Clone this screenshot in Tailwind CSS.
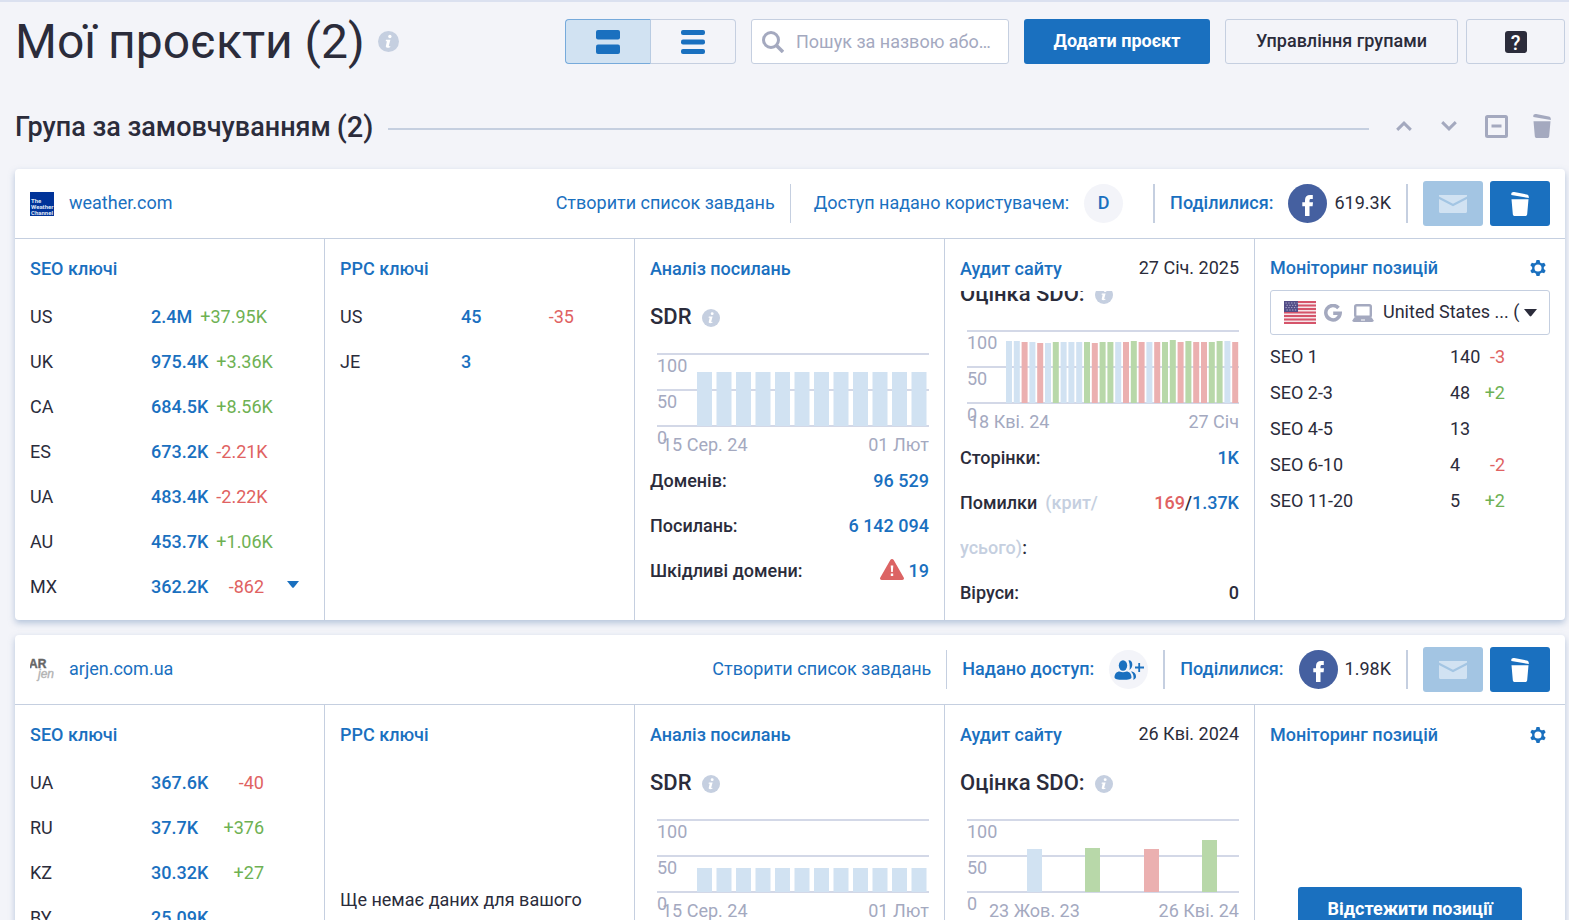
<!DOCTYPE html>
<html lang="uk">
<head>
<meta charset="utf-8">
<meta name="viewport" content="width=device-width, initial-scale=1">
<title>Мої проєкти</title>
<script src="https://cdn.jsdelivr.net/npm/@tailwindcss/browser@4"></script>
</head>
<body class="bg-[#f3f4f9] font-[Roboto,sans-serif] text-[18px] leading-[24px] text-[#2b2c3b]">
<svg class="hidden" aria-hidden="true">
  <symbol id="info" viewBox="0 0 20 20"><circle cx="10" cy="10" r="10" fill="#c5cfe0"/><circle cx="11.3" cy="5.2" r="1.6" fill="#fff"/><path d="M7.6 8.4h4.200l-1.500 5.600c-.1.500.3.600 1.500.2l-.3 1.200c-2.500.9-4.400.7-4-1.100l1-4.500H7.300z" fill="#fff"/></symbol>
  <symbol id="bin" viewBox="0 0 18 24"><path d="M.3 1.800C.4.600 1.500-.2 3.200.100l12.500 2.400c1.500.3 2.300 1.200 2.100 3.500L.3 2.900zM.5 7.200h17l-1.300 14.700c-.1 1.300-.9 2.100-2.100 2.100H3.900c-1.200 0-2-.8-2.100-2.100z" fill="currentColor"/></symbol>
  <symbol id="mail" viewBox="0 0 28 18"><path d="M0 0h28v1.500L14 8.800 0 1.500zM0 4l14 7.300L28 4v12.500c0 .9-.6 1.500-1.500 1.500h-25C.6 18 0 17.400 0 16.500z" fill="currentColor"/></symbol>
  <symbol id="fb" viewBox="0 0 39 39"><circle cx="19.500" cy="19.500" r="19.500" fill="#4560a0"/><path d="M17 32V22.200h-2.700v-3.900H17v-2.200c0-3.400 2-5.100 5-5.100h2.800v4h-1.700c-1.300 0-1.600.6-1.600 1.700v1.600H25l-.4 3.900h-3.100V32z" fill="#fff"/></symbol>
  <symbol id="gear" viewBox="-8 -8 16 16"><g fill="currentColor"><path d="M-1.500-8h3l1 3.800h-5z"/><path d="M-1.500-8h3l1 3.800h-5z" transform="rotate(60)"/><path d="M-1.500-8h3l1 3.800h-5z" transform="rotate(120)"/><path d="M-1.500-8h3l1 3.800h-5z" transform="rotate(180)"/><path d="M-1.500-8h3l1 3.800h-5z" transform="rotate(240)"/><path d="M-1.500-8h3l1 3.800h-5z" transform="rotate(300)"/></g><circle r="4.700" fill="none" stroke="currentColor" stroke-width="2.300"/></symbol>
</svg>

<div class="flex h-screen flex-col overflow-hidden border-t-2 border-[#dbe1f0] pr-1 pl-[15px]">
  <header class="flex shrink-0 items-start pt-[17px]">
    <h1 class="flex flex-1 items-center gap-[13px] text-[48px] leading-[45px] whitespace-nowrap">Мої проєкти (2)<svg class="size-[21px]"><use href="#info"/></svg></h1>
    <div class="flex h-[45px] w-[171px]">
      <button aria-label="Картки" class="grid flex-1 place-items-center rounded-l border border-[#76aadb] border-r-[#b8cbe2] bg-[#d1e2f2]"><svg width="24" height="24" fill="#1a70bf"><rect width="24" height="9.500" rx="2"/><rect y="14.500" width="24" height="9.500" rx="2"/></svg></button>
      <button aria-label="Список" class="grid flex-1 place-items-center rounded-r border border-l-0 border-[#c5cfe0]"><svg width="24" height="24" fill="#1a70bf"><rect width="24" height="5" rx="2"/><rect y="9.500" width="24" height="5" rx="2"/><rect y="19" width="24" height="5" rx="2"/></svg></button>
    </div>
    <label class="ml-[15px] flex h-[45px] w-[258px] items-center gap-3 rounded-[3px] border border-[#c5cfe0] bg-white pl-[10px]">
      <svg width="22" height="22" fill="none" stroke="#a4a9bf"><circle cx="9" cy="9" r="7.500" stroke-width="3"/><path d="M14 14l7 7" stroke-width="3.500"/></svg>
      <input type="text" aria-label="Пошук" placeholder="Пошук за назвою або…" class="w-full min-w-0 flex-1 bg-transparent outline-none placeholder:text-[#a4a9bf]">
    </label>
    <button class="ml-[15px] h-[45px] w-[186px] rounded-[3px] bg-[#1a70bf] pb-0.5 font-bold text-white">Додати проєкт</button>
    <button class="ml-[15px] h-[45px] w-[233px] rounded-[3px] border border-[#c5cfe0] pb-0.5 font-medium">Управління групами</button>
    <button aria-label="Довідка" class="ml-2 grid h-[45px] w-[99px] place-items-center rounded-[3px] border border-[#c5cfe0]"><span class="grid size-[22px] place-items-center rounded-[3px] bg-[#2b2c3b] text-[20px] font-medium text-white">?</span></button>
  </header>

  <section class="mt-11 flex h-[36px] shrink-0 items-center text-[#a4a9bf]">
    <h2 class="flex items-center gap-[6px] pt-0.5 text-[27px] font-medium whitespace-nowrap text-[#2b2c3b]">Група за замовчуванням<span class="text-[29px]">(2)</span></h2>
    <hr class="mt-[5px] ml-[15px] flex-1 border-t-2 border-[#c5cfe0]">
    <button aria-label="Вгору" class="ml-[27px]"><svg width="16" height="10" fill="none" stroke="currentColor" stroke-width="3"><path d="M1.200 8.800L8 2.200l6.800 6.600"/></svg></button>
    <button aria-label="Вниз" class="ml-[29px]"><svg width="16" height="10" fill="none" stroke="currentColor" stroke-width="3"><path d="M1.200 1.200L8 7.800l6.800-6.600"/></svg></button>
    <button aria-label="Згорнути" class="ml-[28px]"><svg width="23" height="23" fill="none" stroke="currentColor" stroke-width="3"><rect x="1.500" y="1.500" width="20" height="20" rx="1"/><path d="M6.500 11h10"/></svg></button>
    <button aria-label="Видалити групу" class="mr-[14px] ml-[25px]"><svg class="h-6 w-[18px]"><use href="#bin"/></svg></button>
  </section>

  <article class="mt-[25px] shrink-0 rounded bg-white shadow-[0_3px_6px_rgba(120,150,190,0.5)]">
    <header class="flex h-[70px] items-center border-b border-[#c5cfe0] px-[15px] whitespace-nowrap text-[#1a70bf] [&_a]:pb-0.5 [&_span]:pb-0.5">
      <svg width="24" height="24" class="mr-[15px]"><rect width="24" height="24" fill="#003399"/><g fill="#dfe6f5" font-family="Roboto" font-weight="700" font-size="6"><text x="1" y="11">The</text><text x="1" y="17">Weather</text><text x="1" y="22.500">Channel</text></g></svg>
      <a href="#">weather.com</a>
      <a href="#" class="ml-auto">Створити список завдань</a>
      <div class="ml-[15px] flex h-[39px] items-center border-l border-[#c5cfe0] pl-[23px]"><span>Доступ надано користувачем:</span><span class="ml-[15px] grid size-[39px] place-items-center rounded-full bg-[#f3f4f9] font-medium">D</span></div>
      <div class="ml-[30px] flex h-[39px] items-center border-l-2 border-[#c5cfe0] pl-[15px]"><span class="font-medium">Поділилися:</span><svg class="ml-[15px] size-[39px]"><use href="#fb"/></svg><span class="ml-[7px] text-[#2b2c3b]">619.3K</span></div>
      <div class="ml-[15px] flex h-[39px] items-center gap-[7px] border-l-2 border-[#c5cfe0] pl-[15px]">
        <button aria-label="Надіслати" class="grid h-[45px] w-[60px] place-items-center rounded-[3px] bg-[#a3c5e3] text-[#d1e2f2]"><svg class="h-[18px] w-7"><use href="#mail"/></svg></button>
        <button aria-label="Видалити" class="grid h-[45px] w-[60px] place-items-center rounded-[3px] bg-[#1a70bf] text-white"><svg class="h-6 w-[18px]"><use href="#bin"/></svg></button>
      </div>
    </header>
    <div class="grid h-[381px] grid-cols-5 divide-x divide-[#c5cfe0]">
      <section class="px-[15px]">
        <h3 class="flex h-[55px] items-center pt-1 font-medium"><a href="#" class="text-[#1a70bf]">SEO ключі</a></h3>
        <table class="block"><tbody class="block whitespace-nowrap">
          <tr class="flex h-[45px] items-center"><td class="w-[121px] shrink-0">US</td><td class="flex w-[113px] justify-between gap-2"><a href="#" class="font-medium text-[#1a70bf]">2.4M</a><span class="text-[#6eb153]">+37.95K</span></td></tr>
          <tr class="flex h-[45px] items-center"><td class="w-[121px] shrink-0">UK</td><td class="flex w-[113px] justify-between gap-2"><a href="#" class="font-medium text-[#1a70bf]">975.4K</a><span class="text-[#6eb153]">+3.36K</span></td></tr>
          <tr class="flex h-[45px] items-center"><td class="w-[121px] shrink-0">CA</td><td class="flex w-[113px] justify-between gap-2"><a href="#" class="font-medium text-[#1a70bf]">684.5K</a><span class="text-[#6eb153]">+8.56K</span></td></tr>
          <tr class="flex h-[45px] items-center"><td class="w-[121px] shrink-0">ES</td><td class="flex w-[113px] justify-between gap-2"><a href="#" class="font-medium text-[#1a70bf]">673.2K</a><span class="text-[#e06262]">-2.21K</span></td></tr>
          <tr class="flex h-[45px] items-center"><td class="w-[121px] shrink-0">UA</td><td class="flex w-[113px] justify-between gap-2"><a href="#" class="font-medium text-[#1a70bf]">483.4K</a><span class="text-[#e06262]">-2.22K</span></td></tr>
          <tr class="flex h-[45px] items-center"><td class="w-[121px] shrink-0">AU</td><td class="flex w-[113px] justify-between gap-2"><a href="#" class="font-medium text-[#1a70bf]">453.7K</a><span class="text-[#6eb153]">+1.06K</span></td></tr>
          <tr class="flex h-[45px] items-center"><td class="w-[121px] shrink-0">MX</td><td class="flex w-[113px] justify-between gap-2"><a href="#" class="font-medium text-[#1a70bf]">362.2K</a><span class="text-[#e06262]">-862</span></td><td class="pb-1 pl-[23px]"><button aria-label="Показати ще" class="block"><svg width="12" height="7" fill="#1a70bf"><path d="M0 0h12L6.800 6.500q-.8.700-1.600 0z"/></svg></button></td></tr>
        </tbody></table>
      </section>

      <section class="px-[15px]">
        <h3 class="flex h-[55px] items-center pt-1 font-medium"><a href="#" class="text-[#1a70bf]">PPC ключі</a></h3>
        <table class="block"><tbody class="block whitespace-nowrap">
          <tr class="flex h-[45px] items-center"><td class="w-[121px] shrink-0">US</td><td class="flex w-[113px] justify-between gap-2"><a href="#" class="font-medium text-[#1a70bf]">45</a><span class="text-[#e06262]">-35</span></td></tr>
          <tr class="flex h-[45px] items-center"><td class="w-[121px] shrink-0">JE</td><td class="flex w-[113px] justify-between gap-2"><a href="#" class="font-medium text-[#1a70bf]">3</a></td></tr>
        </tbody></table>
      </section>

      <section class="px-[15px]">
        <h3 class="flex h-[52px] items-center pt-[7px] font-medium"><a href="#" class="text-[#1a70bf]">Аналіз посилань</a></h3>
        <h4 class="flex h-[50px] items-center gap-[10px] pt-0.5 text-[22px] font-medium">SDR<svg class="mt-0.5 size-[18px]"><use href="#info"/></svg></h4>
        <div class="relative mt-[12px] ml-[7px] h-[78px] text-[#a4a9bf]">
          <svg data-chart="sdr-1" class="h-[75px] w-full" viewBox="0 0 272 75" preserveAspectRatio="none"></svg>
          <div class="absolute top-0 left-0"><p class="h-9 leading-[26px]">100</p><p class="h-9 leading-[26px]">50</p><p class="leading-[26px]">0</p></div>
        </div>
        <div class="flex h-[27px] items-center justify-between pl-[12px] text-[#a4a9bf]"><span>15 Сер. 24</span><span>01 Лют</span></div>
        <dl class="font-medium">
          <div class="flex h-[45px] items-center justify-between"><dt>Доменів:</dt><dd><a href="#" class="text-[#1a70bf]">96 529</a></dd></div>
          <div class="flex h-[45px] items-center justify-between"><dt>Посилань:</dt><dd><a href="#" class="text-[#1a70bf]">6 142 094</a></dd></div>
          <div class="flex h-[45px] items-center justify-between"><dt>Шкідливі домени:</dt><dd class="flex items-center gap-[5px]"><svg width="24" height="21" class="mb-0.5"><path d="M10.300 1c.8-1.300 2.600-1.300 3.400 0l10 17.600c.7 1.200 0 2.400-1.400 2.400H1.700C.3 21-.4 19.800.3 18.600z" fill="#dc6464"/><path d="M10.700 6.500h2.600l-.5 6.500h-1.600zM10.800 14.500h2.400V17h-2.400z" fill="#fff"/></svg><a href="#" class="text-[#1a70bf]">19</a></dd></div>
        </dl>
      </section>

      <section class="flex min-h-0 flex-col px-[15px]">
        <h3 class="flex h-[52px] shrink-0 items-center justify-between pt-[7px] font-medium"><a href="#" class="text-[#1a70bf]">Аудит сайту</a><span class="pb-0.5 font-normal">27 Січ. 2025</span></h3>
        <div class="min-h-0 flex-1 overflow-hidden">
          <h4 class="-mt-[23px] flex h-[50px] items-center gap-[10px] pt-0.5 text-[22px] font-medium">Оцінка SDO:<svg class="mt-0.5 size-[18px]"><use href="#info"/></svg></h4>
          <div class="relative mt-[12px] ml-[7px] h-[78px] text-[#a4a9bf]">
            <svg data-chart="sdo-1" class="h-[75px] w-full" viewBox="0 0 272 75" preserveAspectRatio="none"></svg>
            <div class="absolute top-0 left-0"><p class="h-9 leading-[26px]">100</p><p class="h-9 leading-[26px]">50</p><p class="leading-[26px]">0</p></div>
          </div>
          <div class="flex h-[27px] items-center justify-between pl-[9px] text-[#a4a9bf]"><span>18 Кві. 24</span><span>27 Січ</span></div>
          <dl class="font-medium">
            <div class="flex h-[45px] items-center justify-between"><dt>Сторінки:</dt><dd><a href="#" class="text-[#1a70bf]">1K</a></dd></div>
            <div class="flex h-[90px] justify-between leading-[45px]"><dt class="w-[160px]"><span class="mr-2">Помилки</span><span class="text-[#c5cfe0]">(крит/<br>усього)</span>:</dt><dd><a href="#" class="text-[#e06262]">169</a>/<a href="#" class="text-[#1a70bf]">1.37K</a></dd></div>
            <div class="flex h-[45px] items-center justify-between"><dt>Віруси:</dt><dd>0</dd></div>
          </dl>
        </div>
      </section>

      <section class="px-[15px]">
        <h3 class="flex h-[51px] items-center justify-between pt-[7px] pr-1 font-medium text-[#1a70bf]"><a href="#">Моніторинг позицій</a><button aria-label="Налаштування"><svg class="size-4"><use href="#gear"/></svg></button></h3>
        <label class="flex h-[45px] items-center rounded-[3px] border border-[#c5cfe0] px-3">
          <svg width="32" height="23" class="ml-px shrink-0"><rect width="32" height="23" rx="1" fill="#f5e4e8"/><path d="M0 1h32M0 4.500h32M0 8h32M0 11.500h32M0 15h32M0 18.500h32M0 22h32" stroke="#d5546a" stroke-width="1.800"/><rect width="14" height="11" fill="#524c86"/><path d="M1.500 2h12M2.500 4.300h10M1.500 6.600h12M2.500 9h10" stroke="#b3b2d0" stroke-dasharray="1.300 1.500"/></svg>
          <svg width="18" height="18" class="ml-2 shrink-0" fill="none" stroke="#a4a9bf" stroke-width="3.500"><path d="M14.500 4A7.200 7.200 0 1 0 16.200 9.200H9.200"/></svg>
          <svg width="22" height="18" class="ml-[10px] shrink-0" fill="none" stroke="#a4a9bf"><rect x="3.200" y="1.200" width="15.600" height="11.600" rx="1.500" stroke-width="2.400"/><path d="M2.500 13.200h17l2 3q.5 1.800-1.500 1.800H2q-2 0-1.500-1.800z" fill="#a4a9bf" stroke="none"/><path d="M9 16h4" stroke="#fff"/></svg>
          <select aria-label="Регіон" class="ml-[9px] min-w-0 flex-1 appearance-none pb-0.5 outline-none"><option>United States ... (</option></select>
          <svg width="13" height="8" class="shrink-0" fill="#2b2c3b"><path d="M0 0h13L7.300 7q-.8.800-1.600 0z"/></svg>
        </label>
        <table class="mt-1 block"><tbody class="block">
          <tr class="flex h-9 items-center"><td class="w-[180px]">SEO 1</td><td class="flex w-[55px] justify-between"><span>140</span><span class="text-[#e06262]">-3</span></td></tr>
          <tr class="flex h-9 items-center"><td class="w-[180px]">SEO 2-3</td><td class="flex w-[55px] justify-between"><span>48</span><span class="text-[#6eb153]">+2</span></td></tr>
          <tr class="flex h-9 items-center"><td class="w-[180px]">SEO 4-5</td><td>13</td></tr>
          <tr class="flex h-9 items-center"><td class="w-[180px]">SEO 6-10</td><td class="flex w-[55px] justify-between"><span>4</span><span class="text-[#e06262]">-2</span></td></tr>
          <tr class="flex h-9 items-center"><td class="w-[180px]">SEO 11-20</td><td class="flex w-[55px] justify-between"><span>5</span><span class="text-[#6eb153]">+2</span></td></tr>
        </tbody></table>
      </section>
    </div>
  </article>

  <article class="mt-[15px] shrink-0 rounded bg-white shadow-[0_3px_6px_rgba(120,150,190,0.5)]">
    <header class="flex h-[70px] items-center border-b border-[#c5cfe0] px-[15px] whitespace-nowrap text-[#1a70bf] [&_a]:pb-0.5 [&_span]:pb-0.5">
      <svg width="24" height="24" class="mr-[15px]"><text x="-1" y="10" font-family="Liberation Sans" font-weight="700" font-size="12" fill="#666" stroke="#666" stroke-width=".4">AR</text><text x="8" y="20" font-family="Liberation Sans" font-style="italic" font-size="12" fill="#aaa" stroke="#bbb" stroke-width=".4">jen</text></svg>
      <a href="#">arjen.com.ua</a>
      <a href="#" class="ml-auto">Створити список завдань</a>
      <div class="ml-[15px] flex h-[39px] items-center border-l border-[#c5cfe0] pl-[15px]"><span class="font-medium">Надано доступ:</span><button aria-label="Додати користувача" class="ml-[15px] grid size-[39px] place-items-center rounded-full bg-[#f3f4f9]"><svg width="30" height="20" fill="#1a70bf"><ellipse cx="9" cy="5.500" rx="4.200" ry="5.200"/><path d="M.5 17.500C.5 13.500 3 11.500 5.500 11.500q3.500 1.500 7 0c2.500 0 5 2 5 6q0 2.300-8.500 2.300T.5 17.500zM14.500.300c4.300-.6 5.400 6.500 1 9.700q.8-4.900-1-9.700zM17 11.500c3 0 5 2.300 5 5 0 1.800-1 2.800-2.800 3.200 1-3.500-.2-6.200-2.200-8.200zM24.300 3h1.800v3.600H30v1.900h-3.900V12h-1.800V8.500H21V6.600h3.300z"/></svg></button></div>
      <div class="ml-[15px] flex h-[39px] items-center border-l-2 border-[#c5cfe0] pl-[15px]"><span class="font-medium">Поділилися:</span><svg class="ml-[15px] size-[39px]"><use href="#fb"/></svg><span class="ml-[7px] text-[#2b2c3b]">1.98K</span></div>
      <div class="ml-[15px] flex h-[39px] items-center gap-[7px] border-l-2 border-[#c5cfe0] pl-[15px]">
        <button aria-label="Надіслати" class="grid h-[45px] w-[60px] place-items-center rounded-[3px] bg-[#a3c5e3] text-[#d1e2f2]"><svg class="h-[18px] w-7"><use href="#mail"/></svg></button>
        <button aria-label="Видалити" class="grid h-[45px] w-[60px] place-items-center rounded-[3px] bg-[#1a70bf] text-white"><svg class="h-6 w-[18px]"><use href="#bin"/></svg></button>
      </div>
    </header>
    <div class="grid h-[381px] grid-cols-5 divide-x divide-[#c5cfe0]">
      <section class="px-[15px]">
        <h3 class="flex h-[55px] items-center pt-1 font-medium"><a href="#" class="text-[#1a70bf]">SEO ключі</a></h3>
        <table class="block"><tbody class="block whitespace-nowrap">
          <tr class="flex h-[45px] items-center"><td class="w-[121px] shrink-0">UA</td><td class="flex w-[113px] justify-between gap-2"><a href="#" class="font-medium text-[#1a70bf]">367.6K</a><span class="text-[#e06262]">-40</span></td></tr>
          <tr class="flex h-[45px] items-center"><td class="w-[121px] shrink-0">RU</td><td class="flex w-[113px] justify-between gap-2"><a href="#" class="font-medium text-[#1a70bf]">37.7K</a><span class="text-[#6eb153]">+376</span></td></tr>
          <tr class="flex h-[45px] items-center"><td class="w-[121px] shrink-0">KZ</td><td class="flex w-[113px] justify-between gap-2"><a href="#" class="font-medium text-[#1a70bf]">30.32K</a><span class="text-[#6eb153]">+27</span></td></tr>
          <tr class="flex h-[45px] items-center"><td class="w-[121px] shrink-0">BY</td><td class="flex w-[113px] justify-between gap-2"><a href="#" class="font-medium text-[#1a70bf]">25.09K</a></td></tr>
        </tbody></table>
      </section>

      <section class="flex flex-col px-[15px]">
        <h3 class="flex h-[55px] items-center pt-1 font-medium"><a href="#" class="text-[#1a70bf]">PPC ключі</a></h3>
        <p class="pt-32">Ще немає даних для вашого</p>
      </section>

      <section class="px-[15px]">
        <h3 class="flex h-[52px] items-center pt-[7px] font-medium"><a href="#" class="text-[#1a70bf]">Аналіз посилань</a></h3>
        <h4 class="flex h-[50px] items-center gap-[10px] pt-0.5 text-[22px] font-medium">SDR<svg class="mt-0.5 size-[18px]"><use href="#info"/></svg></h4>
        <div class="relative mt-[12px] ml-[7px] h-[78px] text-[#a4a9bf]">
          <svg data-chart="sdr-2" class="h-[75px] w-full" viewBox="0 0 272 75" preserveAspectRatio="none"></svg>
          <div class="absolute top-0 left-0"><p class="h-9 leading-[26px]">100</p><p class="h-9 leading-[26px]">50</p><p class="leading-[26px]">0</p></div>
        </div>
        <div class="flex h-[27px] items-center justify-between pl-[12px] text-[#a4a9bf]"><span>15 Сер. 24</span><span>01 Лют</span></div>
      </section>

      <section class="px-[15px]">
        <h3 class="flex h-[52px] items-center justify-between pt-[7px] font-medium"><a href="#" class="text-[#1a70bf]">Аудит сайту</a><span class="pb-0.5 font-normal">26 Кві. 2024</span></h3>
        <h4 class="flex h-[50px] items-center gap-[10px] pt-0.5 text-[22px] font-medium">Оцінка SDO:<svg class="mt-0.5 size-[18px]"><use href="#info"/></svg></h4>
        <div class="relative mt-[12px] ml-[7px] h-[78px] text-[#a4a9bf]">
          <svg data-chart="sdo-2" class="h-[75px] w-full" viewBox="0 0 272 75" preserveAspectRatio="none"></svg>
          <div class="absolute top-0 left-0"><p class="h-9 leading-[26px]">100</p><p class="h-9 leading-[26px]">50</p><p class="leading-[26px]">0</p></div>
        </div>
        <div class="flex h-[27px] items-center justify-between pl-[29px] text-[#a4a9bf]"><span>23 Жов. 23</span><span>26 Кві. 24</span></div>
      </section>

      <section class="px-[15px]">
        <h3 class="flex h-[52px] items-center justify-between pt-[7px] pr-1 font-medium text-[#1a70bf]"><a href="#">Моніторинг позицій</a><button aria-label="Налаштування"><svg class="size-4"><use href="#gear"/></svg></button></h3>
        <button class="mx-auto mt-[130px] block h-[45px] w-[224px] rounded-[3px] bg-[#1a70bf] pb-0.5 font-bold text-white">Відстежити позиції</button>
      </section>
    </div>
  </article>
</div>

<script>
  // Bars: [x, top, width, colour]; the scale runs from 0 (value 100) to 72 (value 0).
  const colours = { b: '#d1e2f2', g: '#b8d8a9', r: '#ebb0b0' };
  const row = (count, top) => Array.from({ length: count }, (_, i) => [40 + i * 19.5, top, 15, 'b']);
  const audit = 'b11 b11 r12 b12 r13 b13 g12 b12 b12 b12 g12 r13 g12 g12 b12 r12 g11 r12 b12 r12 g12 g10 r12 g11 r12 r12 g12 g11 b11 r12'
    .split(' ').map((v, i) => [39 + i * 7.8, +v.slice(1), 6, v[0]]);
  const charts = {
    'sdr-1': row(12, 19),
    'sdr-2': row(12, 49),
    'sdo-1': audit,
    'sdo-2': [[60, 30, 15, 'b'], [118, 29, 15, 'g'], [177, 30, 15, 'r'], [235, 21, 15, 'g']]
  };
  for (const svg of document.querySelectorAll('[data-chart]')) {
    svg.innerHTML = [0, 36, 72].map(y => `<rect x="0" y="${y}" width="272" height="2" fill="#d3d8e7"/>`).join('') +
      charts[svg.dataset.chart].map(([x, y, w, c]) => `<rect x="${x}" y="${y}" width="${w}" height="${73 - y}" fill="${colours[c]}"/>`).join('');
  }
</script>
</body>
</html>
